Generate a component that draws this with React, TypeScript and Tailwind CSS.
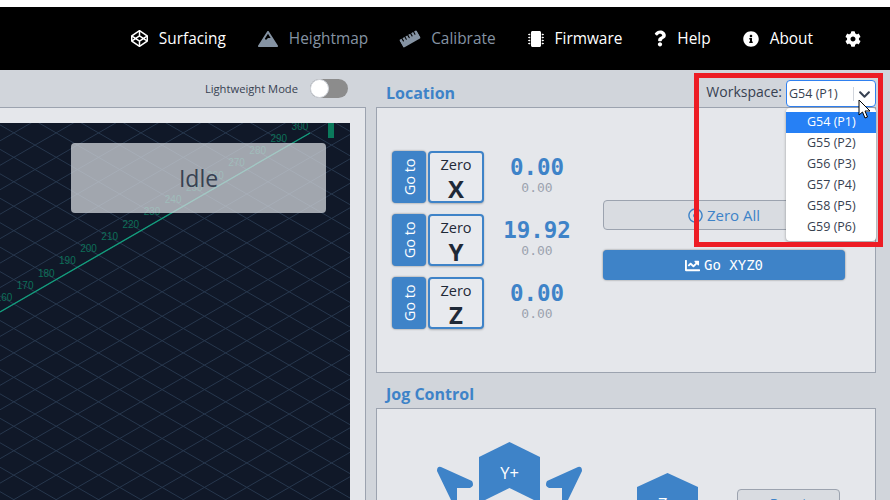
import { FaChartLine, FaChevronDown, FaCodepen, FaCog, FaInfoCircle, FaMicrochip, FaMountain, FaQuestion, FaRegDotCircle, FaRulerHorizontal } from "react-icons/fa";

const navItems = [
    { label: "Surfacing", icon: <FaCodepen size={17} />, muted: false },
    { label: "Heightmap", icon: <FaMountain size={20} />, muted: true },
    { label: "Calibrate", icon: <FaRulerHorizontal size={20} className="-rotate-30" />, muted: true },
    { label: "Firmware", icon: <FaMicrochip size={16} />, muted: false },
    { label: "Help", icon: <FaQuestion size={17} className="w-[12px]" />, muted: false },
    { label: "About", icon: <FaInfoCircle size={16} />, muted: false },
];

const axes = [
    { axis: "X", value: "0.00" },
    { axis: "Y", value: "19.92" },
    { axis: "Z", value: "0.00" },
];

const workspaces = ["G54 (P1)", "G55 (P2)", "G56 (P3)", "G57 (P4)", "G58 (P5)", "G59 (P6)"];

const risingLines = Array.from({ length: 26 }, (_, k) => 312 + (k - 9) * 24.45);
const fallingLines = Array.from({ length: 30 }, (_, k) => 320.5 + (k - 20) * 24.45);
const labels = Array.from({ length: 15 }, (_, i) => 160 + i * 10);

const Viewport = () => (
    <svg width="350" height="377" viewBox="0 123 350 377" className="block">
        <rect x="0" y="123" width="350" height="377" fill="#101828" />
        {risingLines.map((c) => (
            <line key={c} x1="0" y1={c} x2="350" y2={c - 202} stroke="#27374d" strokeWidth="1" />
        ))}
        {fallingLines.map((c) => (
            <line key={c} x1="0" y1={c} x2="350" y2={c + 202} stroke="#27374d" strokeWidth="1" />
        ))}
        <line x1="0" y1="312" x2="310" y2="133" stroke="#12a07e" strokeWidth="1.3" />
        <rect x="328" y="123" width="6" height="15" fill="#0b7a5c" />
        {labels.map((n, i) => (
            <text key={n} x={4 + i * 21.14} y={301 - i * 12.23} textAnchor="middle" fill="#0d6f58" fontSize="10" fontFamily="Liberation Sans, sans-serif">
                {n}
            </text>
        ))}
    </svg>
);

const JogPad = () => (
    <svg width="270" height="58" viewBox="430 442 270 58" className="block">
        <path d="M479 457 L509.5 442 L540 457 L540 510 L479 510 Z" fill="#3e83c8" />
        <path d="M479 503 L509.5 488 L540 503 L540 510 L479 510 Z" fill="#e5e7eb" />
        <path d="M441 467 L472 481 Q475 486 470 488 L457 488 L457 500 L451 500 L437 471 Q437 466 441 467 Z" fill="#3e83c8" />
        <path d="M578 467 L547 481 Q544 486 549 488 L562 488 L562 500 L568 500 L582 471 Q582 466 578 467 Z" fill="#3e83c8" />
        <text x="509.5" y="479" textAnchor="middle" fill="#fff" fontSize="16.5" fontFamily="Open Sans, sans-serif">Y+</text>
        <path d="M637 487 L667.5 473 L698 487 L698 510 L637 510 Z" fill="#3e83c8" />
        <text x="667.5" y="510" textAnchor="middle" fill="#fff" fontSize="16.5" fontFamily="Open Sans, sans-serif">Z+</text>
    </svg>
);

export default function App() {
    return (
        <div className="relative h-[500px] w-[890px] overflow-hidden bg-[#d1d5db] font-['Open_Sans',sans-serif] text-[#1f2937]">
            <div className="h-[7px] bg-white" />
            <header className="flex h-[63px] items-center justify-end gap-[32px] bg-black pt-[1px] pr-[29px] text-[15.4px]">
                {navItems.map((item) => (
                    <div key={item.label} className={`flex items-center gap-[11px] ${item.muted ? "text-[#8593a3]" : "text-white"}`}>
                        {item.icon}
                        <span>{item.label}</span>
                    </div>
                ))}
                <FaCog size={16} className="text-white" />
            </header>

            <main className="flex">
                <section className="w-[366px]">
                    <div className="flex h-[37px] items-center justify-end gap-[12px] pr-[18px] text-[11.2px] text-[#374151]">
                        <span className="mt-[1px]">Lightweight Mode</span>
                        <div className="flex h-[19px] w-[38px] items-center rounded-full bg-[#8c8c8c]">
                            <div className="h-[19px] w-[19px] rounded-full border border-gray-300 bg-white" />
                        </div>
                    </div>
                    <div className="h-[393px] border-t border-r border-[#9ca3af] bg-[#e5e7eb] pt-[15px]">
                        <div className="relative w-[350px]">
                            <Viewport />
                            <div className="absolute top-[20px] left-[71px] flex h-[70px] w-[255px] items-center justify-center rounded bg-[#d1d5db]/75 text-[23px] text-[#374151]">
                                Idle
                            </div>
                        </div>
                    </div>
                </section>

                <section className="ml-[10px] w-[500px]">
                    <div className="relative flex h-[37px] justify-between">
                        <h2 className="pt-[11px] pl-[10px] text-[16px] font-bold text-[#3e83c8]">Location</h2>
                        <div className="flex items-start gap-[4px] pt-[10px] text-[14px] text-[#374151]">
                            <span className="mt-[1px]">Workspace:</span>
                            <div className="relative">
                                <div className="flex h-[27px] w-[90px] items-center rounded border-[1.5px] border-[#2f80f0] bg-white pt-[1px] pl-[2px] text-[12.5px]">
                                    <span>G54 (P1)</span>
                                    <span className="ml-[15px] h-[14px] w-px bg-gray-300" />
                                    <FaChevronDown size={13} className="ml-[4px] text-[#374151]" />
                                </div>
                                <ul className="absolute top-[28px] left-0 z-10 h-[133px] w-[90px] rounded bg-white pt-[4px] text-[12.5px] shadow-[0_1px_3px_rgba(0,0,0,0.35)]">
                                    {workspaces.map((w, i) => (
                                        <li key={w} className={`flex h-[21px] items-center pl-[21px] ${i === 0 ? "bg-[#2680f5] text-white" : ""}`}>
                                            {w}
                                        </li>
                                    ))}
                                </ul>
                            </div>
                        </div>
                    </div>

                    <div className="flex h-[266px] items-center border border-[#9ca3af] bg-[#e5e7eb] pl-[15px]">
                        <div className="flex w-[211px] flex-col gap-[11px]">
                            {axes.map((a) => (
                                <div key={a.axis} className="flex items-center">
                                    <button className="flex h-[52px] w-[34px] items-center justify-center rounded-sm bg-[#3e83c8] pl-[1px] text-[14.5px] text-white shadow-[0_0_2px_rgba(0,0,0,0.5)]">
                                        <span className="-rotate-90 whitespace-nowrap">Go to</span>
                                    </button>
                                    <button className="ml-[2px] flex h-[52px] w-[56px] flex-col items-center rounded border-2 border-[#3e83c8] bg-[#e8eaee] leading-none shadow-[0_1px_2px_rgba(0,0,0,0.25)]">
                                        <span className="mt-[2px] text-[14.5px] leading-[20px]">Zero</span>
                                        <span className="text-[24px] leading-[27px] font-bold">{a.axis}</span>
                                    </button>
                                    <div className="-mt-[5px] ml-[10px] flex w-[86px] flex-col items-center font-['DejaVu_Sans_Mono',monospace]">
                                        <span className="text-[22.5px] leading-[26px] font-bold text-[#3e83c8]">{a.value}</span>
                                        <span className="text-[13px] leading-[15px] text-[#9ca3af]">0.00</span>
                                    </div>
                                </div>
                            ))}
                        </div>
                        <div className="flex w-[242px] flex-col gap-[20px]">
                            <button className="flex h-[30px] items-center justify-center gap-[4px] rounded-sm border border-[#9ca3af] bg-[#d9dce1] text-[15px] text-[#3e83c8]">
                                <FaRegDotCircle size={15} />
                                Zero All
                            </button>
                            <button className="flex h-[30px] items-center justify-center gap-[4px] rounded-sm bg-[#3e83c8] text-white shadow-[0_0_2px_rgba(0,0,0,0.5)]">
                                <FaChartLine size={15} />
                                <span className="font-['DejaVu_Sans_Mono',monospace] text-[14px]">Go XYZ0</span>
                            </button>
                        </div>
                    </div>

                    <h2 className="mt-[9px] h-[26px] pl-[10px] text-[16px] font-bold text-[#3e83c8]">Jog Control</h2>
                    <div className="h-[120px] border border-[#9ca3af] bg-[#e5e7eb] pt-[33px] pl-[53px]">
                        <div className="flex items-start">
                            <JogPad />
                            <button className="mt-[47px] ml-[37px] h-[30px] w-[103px] rounded border border-[#9ca3af] bg-[#d9dce1] text-[14.5px] text-[#3e83c8]">
                                Reset
                            </button>
                        </div>
                    </div>
                </section>
            </main>

            <div className="pointer-events-none absolute top-[73px] left-[694px] z-20 h-[174px] w-[189px] border-[5px] border-[#ed1c24]" />
            <svg width="14" height="20" viewBox="0 0 14 20" className="absolute top-[99px] left-[858px] z-30">
                <path d="M1 1 L1 16 L4.5 13 L7 19 L9.5 18 L7 12 L12 12 Z" fill="#fff" stroke="#000" strokeWidth="1" />
            </svg>
        </div>
    );
}
